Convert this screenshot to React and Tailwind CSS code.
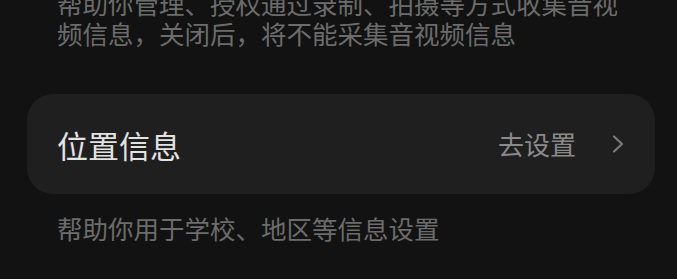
export default function App() {
  const font = { fontFamily: '"Noto Sans CJK SC", "Noto Sans", sans-serif' }

  return (
    <div className="w-[677px] h-[279px] overflow-hidden bg-[#121212]" style={font}>
      <div className="-mt-[12px] flex flex-col">
        <p className="ml-[57px] w-[575px] text-[25.5px] leading-[30px] text-[#6c6c6c]">
          帮助你管理、授权通过录制、拍摄等方式收集音视频信息，关闭后，将不能采集音视频信息
        </p>

        <div className="ml-[27px] mr-[22px] mt-[46px] h-[100px] rounded-[26px] bg-[#1f1f1f] flex items-center justify-between pl-[30px] pr-[30px]">
          <span className="text-[31px] leading-none text-[#e2e2e2]">位置信息</span>
          <div className="flex items-center gap-[35px]">
            <span className="text-[26px] leading-none text-[#8a8a8a]">去设置</span>
            <svg width="14" height="20" viewBox="0 0 14 20" fill="none">
              <path d="M3 2.5 L11 10 L3 17.5" stroke="#7a7a7a" strokeWidth="2.2" strokeLinecap="round" strokeLinejoin="round" />
            </svg>
          </div>
        </div>

        <p className="ml-[57px] mt-[19px] text-[25.5px] leading-[30px] text-[#6c6c6c]">
          帮助你用于学校、地区等信息设置
        </p>
      </div>
    </div>
  )
}
